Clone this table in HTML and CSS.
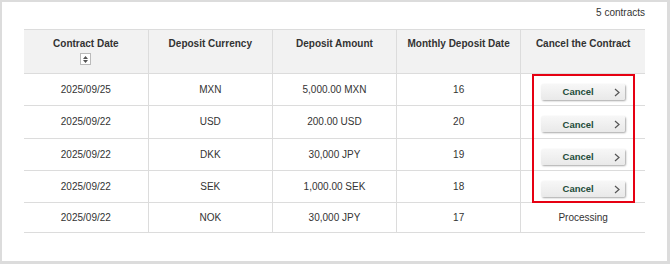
FILE: index.html
```html
<!DOCTYPE html>
<html>
<head>
<meta charset="utf-8">
<link rel="stylesheet" href="styles.css">
</head>
<body>
<div class="frame">
  <div class="count">5 contracts</div>
  <div class="table-wrap">
    <table class="contracts">
      <thead>
        <tr>
          <th>Contract Date<div class="sort"><svg width="7" height="9" viewBox="0 0 7 9"><path d="M3.5 1 L6 4 H1 Z M3.5 8 L6 5 H1 Z" fill="#555"/></svg></div></th>
          <th>Deposit Currency</th>
          <th>Deposit Amount</th>
          <th>Monthly Deposit Date</th>
          <th>Cancel the Contract</th>
        </tr>
      </thead>
      <tbody>
        <tr><td>2025/09/25</td><td>MXN</td><td>5,000.00 MXN</td><td>16</td><td><button class="btn">Cancel<svg class="chev" width="6" height="9" viewBox="0 0 6 9"><path d="M1 1 L5 4.5 L1 8" fill="none" stroke="#555" stroke-width="1.2"/></svg></button></td></tr>
        <tr class="tall"><td>2025/09/22</td><td>USD</td><td>200.00 USD</td><td>20</td><td><button class="btn">Cancel<svg class="chev" width="6" height="9" viewBox="0 0 6 9"><path d="M1 1 L5 4.5 L1 8" fill="none" stroke="#555" stroke-width="1.2"/></svg></button></td></tr>
        <tr><td>2025/09/22</td><td>DKK</td><td>30,000 JPY</td><td>19</td><td><button class="btn">Cancel<svg class="chev" width="6" height="9" viewBox="0 0 6 9"><path d="M1 1 L5 4.5 L1 8" fill="none" stroke="#555" stroke-width="1.2"/></svg></button></td></tr>
        <tr><td>2025/09/22</td><td>SEK</td><td>1,000.00 SEK</td><td>18</td><td><button class="btn">Cancel<svg class="chev" width="6" height="9" viewBox="0 0 6 9"><path d="M1 1 L5 4.5 L1 8" fill="none" stroke="#555" stroke-width="1.2"/></svg></button></td></tr>
        <tr class="plain"><td>2025/09/22</td><td>NOK</td><td>30,000 JPY</td><td>17</td><td>Processing</td></tr>
      </tbody>
    </table>
    <div class="highlight"></div>
  </div>
</div>
</body>
</html>
```
FILE: styles.css
```css
html, body {
  margin: 0;
  padding: 0;
  background: #fff;
}
.frame {
  width: 670px;
  height: 264px;
  box-sizing: border-box;
  border-style: solid;
  border-color: #dcdcdc;
  border-width: 2px 3px 3px 2px;
  padding: 5px 22px 0 22px;
  font-family: "Liberation Sans", Arial, sans-serif;
  color: #333;
  font-size: 10px;
}
.count {
  text-align: right;
  height: 12px;
  line-height: 12px;
  margin-bottom: 10px;
}
.table-wrap {
  position: relative;
}
.contracts {
  width: 621px;
  border-collapse: collapse;
  table-layout: fixed;
}
.contracts th, .contracts td {
  border: 1px solid #dcdcdc;
  text-align: center;
}
.contracts tr > :first-child { border-left: none; }
.contracts tr > :last-child { border-right: none; }
.contracts th {
  background: #f2f2f2;
  font-weight: bold;
  height: 44px;
  vertical-align: top;
  padding: 7px 0 0;
  line-height: 14px;
  box-sizing: border-box;
}
.sort {
  width: 9px;
  height: 10px;
  margin: 2px auto 0;
  border: 1px solid #bbb;
  background: #fff;
  display: flex;
  align-items: center;
  justify-content: center;
}
.contracts td {
  height: 31px;
  padding: 0;
  vertical-align: middle;
  line-height: 14px;
}
.contracts tr.tall td {
  height: 32px;
}
.contracts tr.plain td {
  height: 29px;
}
.btn {
  position: relative;
  display: block;
  width: 84px;
  height: 16px;
  margin: 4px auto 0;
  padding: 0 10px 0 0;
  border: none;
  border-radius: 2px;
  background: linear-gradient(#f7f7f7, #e9e9e9);
  box-shadow: 1px 1px 2px rgba(0,0,0,0.35);
  font-family: inherit;
  font-size: 9.5px;
  font-weight: bold;
  color: #234d3a;
  cursor: pointer;
}
.chev {
  position: absolute;
  right: 5px;
  top: 4px;
}
.highlight {
  position: absolute;
  left: 508px;
  top: 45px;
  width: 99px;
  height: 125px;
  border: 2px solid #e60012;
  pointer-events: none;
}
```
